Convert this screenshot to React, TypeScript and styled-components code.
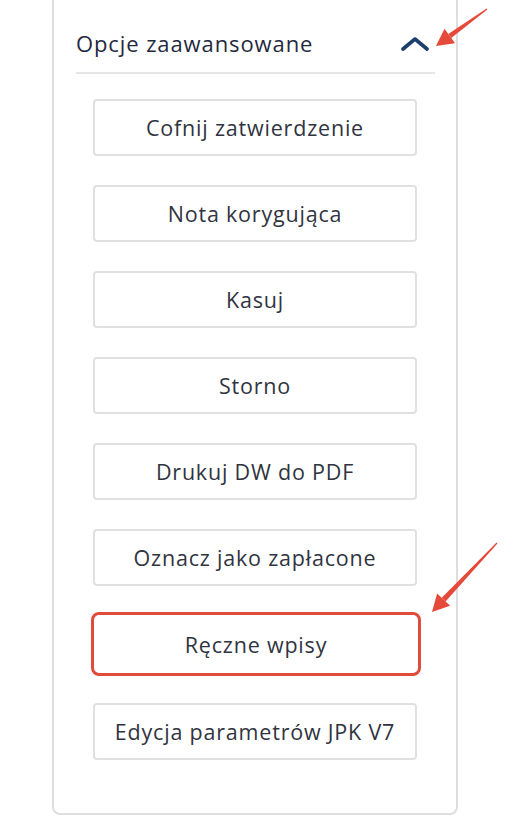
import type { FC } from 'react'
import styled, { createGlobalStyle } from 'styled-components'

const actions = [
  'Cofnij zatwierdzenie',
  'Nota korygująca',
  'Kasuj',
  'Storno',
  'Drukuj DW do PDF',
  'Oznacz jako zapłacone',
  'Ręczne wpisy',
  'Edycja parametrów JPK V7',
]

const highlighted = 'Ręczne wpisy'

const ChevronUp: FC = () => (
  <svg width="30" height="16" viewBox="0 0 30 16" fill="none">
    <path d="M3 14 L15 4 L27 14" stroke="#1d3f6e" strokeWidth="3.6" strokeLinecap="round" strokeLinejoin="round" />
  </svg>
)

/** Red annotation arrow, drawn as a tapering shaft plus a head. */
const Arrow: FC<{ from: [number, number]; to: [number, number] }> = ({ from, to }) => {
  const [x1, y1] = from
  const [x2, y2] = to
  const dx = x2 - x1
  const dy = y2 - y1
  const len = Math.hypot(dx, dy)
  const ux = dx / len
  const uy = dy / len
  const nx = -uy
  const ny = ux
  const headLen = 17
  const headW = 9
  const bx = x2 - ux * headLen
  const by = y2 - uy * headLen
  const shaft = [
    [x1 + nx * 0.6, y1 + ny * 0.6],
    [bx + nx * 2.6, by + ny * 2.6],
    [bx - nx * 2.6, by - ny * 2.6],
    [x1 - nx * 0.6, y1 - ny * 0.6],
  ]
  const head = [
    [x2, y2],
    [bx + nx * headW, by + ny * headW],
    [bx - nx * headW, by - ny * headW],
  ]
  const pts = (p: number[][]) => p.map((q) => q.join(',')).join(' ')
  return (
    <>
      <polygon points={pts(shaft)} fill="#e5493a" />
      <polygon points={pts(head)} fill="#e5493a" />
    </>
  )
}

const App: FC = () => (
  <Page>
    <GlobalStyle />
    <Card>
      <Header>
        <Title>Opcje zaawansowane</Title>
        <ChevronUp />
      </Header>
      <ActionList>
        {actions.map((label) => (
          <ActionButton key={label} $marked={label === highlighted}>
            {label}
          </ActionButton>
        ))}
      </ActionList>
    </Card>
    <Annotations width="516" height="840" viewBox="0 0 516 840">
      <Arrow from={[487, 9]} to={[436, 46]} />
      <Arrow from={[497, 543]} to={[432, 612]} />
    </Annotations>
  </Page>
)

const GlobalStyle = createGlobalStyle`
  html, body {
    margin: 0;
    padding: 0;
    background: #ffffff;
  }
  body {
    font-family: "Open Sans", "Noto Sans", sans-serif;
  }
`

const Page = styled.div`
  position: relative;
  width: 516px;
  height: 840px;
  overflow: hidden;
  background: #ffffff;
  padding: 0 58px 0 52px;
  box-sizing: border-box;
`

const Card = styled.div`
  margin-top: -12px;
  height: 827px;
  box-sizing: border-box;
  border: 2px solid #dedede;
  border-radius: 8px;
  padding: 0 21px 0 22px;
  display: flex;
  flex-direction: column;
`

const Header = styled.div`
  display: flex;
  align-items: center;
  justify-content: space-between;
  height: 84px;
  padding-top: 24px;
  padding-right: 5px;
  box-sizing: border-box;
  border-bottom: 2px solid #e6e6e6;
`

const Title = styled.span`
  font-size: 22px;
  color: #1f2940;
  letter-spacing: 0.9px;
`

const ActionList = styled.div`
  display: flex;
  flex-direction: column;
  gap: 29px;
  padding: 25px 18px 0 17px;
`

const ActionButton = styled.button<{ $marked: boolean }>`
  height: 57px;
  box-sizing: border-box;
  display: flex;
  align-items: center;
  justify-content: center;
  background: #ffffff;
  font-family: "Open Sans", "Noto Sans", sans-serif;
  font-size: 21.5px;
  font-weight: 500;
  color: #30343f;
  letter-spacing: 0.8px;
  border: 2px solid #e0e0e0;
  border-radius: 4px;
  cursor: pointer;
  white-space: nowrap;
  padding: 0;
  ${({ $marked }) =>
    $marked &&
    `
    border: 3px solid #e04b3c;
    border-radius: 8px;
    margin: -3px -4px -2px -2px;
    height: 64px;
  `}
`

const Annotations = styled.svg`
  position: absolute;
  left: 0;
  top: 0;
  pointer-events: none;
`

export default App
